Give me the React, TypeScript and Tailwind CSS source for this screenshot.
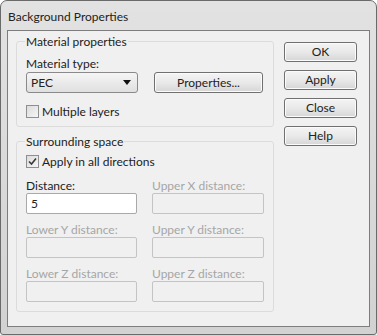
import React from "react";

type BtnProps = { label: string; className?: string };

function Button({ label, className = "" }: BtnProps) {
    return (
        <div
            className={`h-[20px] flex items-center justify-center rounded-[3px] border border-[#707070] bg-gradient-to-b from-[#f4f4f4] via-[#e9e9e9] to-[#d6d6d6] text-[12px] text-[#222] shadow-[inset_0_0_0_1px_#fbfbfb] ${className}`}
        >
            {label}
        </div>
    );
}

function CheckBox({ checked, label }: { checked?: boolean; label: string }) {
    return (
        <div className="flex items-center gap-[3px] h-[15px]">
            <div className="w-[13px] h-[13px] border border-[#8e8f8f] bg-gradient-to-br from-[#dcdcdc] to-[#f6f6f6] flex items-center justify-center">
                {checked && (
                    <svg width="9" height="9" viewBox="0 0 9 9">
                        <path d="M1 4.5 L3.5 7 L8 1.5" fill="none" stroke="#3a3a3a" strokeWidth="1.6" />
                    </svg>
                )}
            </div>
            <span className="text-[12px] leading-[15px] text-[#222]">{label}</span>
        </div>
    );
}

function Field({ label, value, disabled }: { label: string; value?: string; disabled?: boolean }) {
    return (
        <div className="flex flex-col">
            <span className={`text-[12px] leading-[15px] h-[15px] ${disabled ? "text-[#a6a6a6]" : "text-[#222]"}`}>
                {label}
            </span>
            <div
                className={`h-[21px] rounded-[2px] border flex items-center px-[4px] text-[12px] ${
                    disabled ? "border-[#c4c4c4] bg-[#f0f0f0]" : "border-[#a9a9a9] bg-white text-[#222]"
                }`}
            >
                {value}
            </div>
        </div>
    );
}

function Group({ title, className = "", children }: { title: string; className?: string; children: React.ReactNode }) {
    return (
        <fieldset className={`border border-[#dcdcdc] rounded-[3px] px-[9px] ${className}`}>
            <legend className="-ml-[1px] px-[1px] text-[12px] leading-[15px] text-[#222]">{title}</legend>
            {children}
        </fieldset>
    );
}

export default function App() {
    return (
        <div
            className="w-[377px] h-[335px] flex flex-col bg-gradient-to-b from-[#e2e2e2] to-[#d2d2d2] border border-[#6a6a6a] rounded-t-[7px] rounded-b-[3px]"
            style={{ fontFamily: 'Lato, "Noto Sans", sans-serif' }}
        >
            <div className="h-[29px] pl-[7px] pt-[8px] text-[12px] leading-[15px] text-[#222]">
                Background Properties
            </div>
            <div className="ml-[6px] w-[363px] h-[297px] border border-[#7d7d7d] bg-[#f0f0f0] flex gap-[10px] pl-[8px] pt-[3px]">
                <div className="w-[258px] flex flex-col">
                    <Group title="Material properties" className="h-[93px]">
                        <div className="pt-[7px] text-[12px] leading-[15px] text-[#222]">Material type:</div>
                        <div className="flex gap-[16px] mt-[1px]">
                            <div className="w-[112px] h-[21px] rounded-[3px] border border-[#8a8a8a] bg-gradient-to-b from-[#f5f5f5] to-[#e0e0e0] flex items-center justify-between px-[4px] text-[12px] text-[#222]">
                                <span>PEC</span>
                                <svg width="8" height="5" viewBox="0 0 8 5" className="mr-[2px]">
                                    <path d="M0 0 H8 L4 5 Z" fill="#111" />
                                </svg>
                            </div>
                            <Button label="Properties..." className="w-[109px] h-[21px]" />
                        </div>
                        <div className="mt-[11px]">
                            <CheckBox label="Multiple layers" />
                        </div>
                    </Group>
                    <Group title="Surrounding space" className="mt-[7px] h-[178px]">
                        <div className="pt-[5px]">
                            <CheckBox checked label="Apply in all directions" />
                        </div>
                        <div className="grid grid-cols-[111px_112px] gap-x-[15px] gap-y-[8px] mt-[9px]">
                            <Field label="Distance:" value="5" />
                            <Field label="Upper X distance:" disabled />
                            <Field label="Lower Y distance:" disabled />
                            <Field label="Upper Y distance:" disabled />
                            <Field label="Lower Z distance:" disabled />
                            <Field label="Upper Z distance:" disabled />
                        </div>
                    </Group>
                </div>
                <div className="flex flex-col gap-[8px] pt-[8px]">
                    <Button label="OK" className="w-[73px]" />
                    <Button label="Apply" className="w-[73px]" />
                    <Button label="Close" className="w-[73px]" />
                    <Button label="Help" className="w-[73px]" />
                </div>
            </div>
        </div>
    );
}
